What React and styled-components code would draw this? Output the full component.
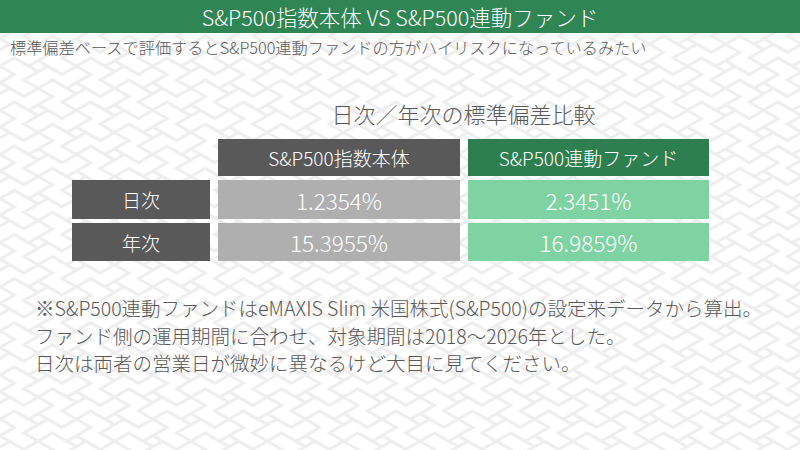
import styled, { createGlobalStyle } from "styled-components";

const GlobalStyle = createGlobalStyle`
  html, body {
    margin: 0;
    padding: 0;
    background: #ffffff;
  }
  body {
    font-family: "Noto Sans CJK JP", "Noto Sans", sans-serif;
    font-weight: 300;
  }
`;

// 紗綾形っぽい背景（かなり薄いグレー）
const patternSvg = `<svg xmlns="http://www.w3.org/2000/svg" width="800" height="450">
<defs>
<pattern id="p" width="40" height="40" patternUnits="userSpaceOnUse" patternTransform="scale(1.35,0.78) rotate(45)">
<path d="M20 20V5H35M20 20H35V35M20 20V35H5M20 20H5V5M35 5H40M0 5H5M35 35V40M35 0V5M5 35H0M40 35H35M5 5V0M5 40V35" fill="none" stroke="#eeeeee" stroke-width="3.2" stroke-linecap="square"/>
</pattern>
</defs>
<rect width="800" height="450" fill="url(#p)"/>
</svg>`;

const Page = styled.div`
  width: 800px;
  height: 450px;
  overflow: hidden;
  background-color: #ffffff;
  background-image: url("data:image/svg+xml,${encodeURIComponent(patternSvg)}");
  background-size: 800px 450px;
  background-repeat: no-repeat;
  color: #595959;
`;

const TitleBar = styled.header`
  height: 33px;
  background: #2f8554;
  color: #ffffff;
  font-size: 21.5px;
  line-height: 33px;
  text-align: center;
`;

const Lead = styled.p`
  margin: 4px 0 0 10px;
  font-size: 16.2px;
  line-height: 20px;
  color: #595959;
`;

const Table = styled.div`
  display: grid;
  grid-template-columns: 138px 242px 241px;
  grid-template-rows: 37px 37px 39px 38px;
  column-gap: 8px;
  row-gap: 4px;
  margin: 41px 0 0 72px;
`;

const TableTitle = styled.div`
  grid-column: 2 / 4;
  align-self: start;
  text-align: center;
  font-size: 22px;
  line-height: 30px;
  color: #595959;
`;

const tones = {
  blank: "transparent",
  dark: "#595959",
  green: "#2e7f50",
  gray: "#afafaf",
  mint: "#7fd3a2",
};

const Cell = styled.div`
  display: flex;
  align-items: center;
  justify-content: center;
  background: ${(p) => tones[p.$tone]};
  color: #ffffff;
  font-size: ${(p) => (p.$big ? "22.5px" : "19px")};
`;

const Notes = styled.div`
  margin: 33px 0 0 35px;
  font-size: 19.5px;
  line-height: 27.5px;
  color: #595959;
`;

const rows = [
  { label: "日次", index: "1.2354%", fund: "2.3451%" },
  { label: "年次", index: "15.3955%", fund: "16.9859%" },
];

export default function App() {
  return (
    <>
      <GlobalStyle />
      <Page>
        <TitleBar>S&amp;P500指数本体 VS S&amp;P500連動ファンド</TitleBar>
        <Lead>
          標準偏差ベースで評価するとS&amp;P500連動ファンドの方がハイリスクになっているみたい
        </Lead>
        <Table>
          <TableTitle>日次／年次の標準偏差比較</TableTitle>
          <Cell $tone="blank" />
          <Cell $tone="dark">S&amp;P500指数本体</Cell>
          <Cell $tone="green">S&amp;P500連動ファンド</Cell>
          {rows.map((r) => (
            <>
              <Cell key={r.label} $tone="dark">
                {r.label}
              </Cell>
              <Cell $tone="gray" $big>
                {r.index}
              </Cell>
              <Cell $tone="mint" $big>
                {r.fund}
              </Cell>
            </>
          ))}
        </Table>
        <Notes>
          <div>※S&amp;P500連動ファンドはeMAXIS Slim 米国株式(S&amp;P500)の設定来データから算出。</div>
          <div>ファンド側の運用期間に合わせ、対象期間は2018～2026年とした。</div>
          <div>日次は両者の営業日が微妙に異なるけど大目に見てください。</div>
        </Notes>
      </Page>
    </>
  );
}
